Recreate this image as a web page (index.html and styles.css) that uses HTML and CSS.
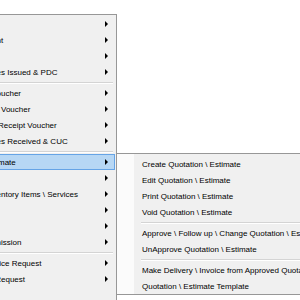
FILE: index.html
```html
<!DOCTYPE html>
<html lang="en">
<head>
    <meta charset="UTF-8">
    <meta name="viewport" content="width=device-width, initial-scale=1.0">
    <title>Quotation Menu</title>
    <link rel="stylesheet" href="styles.css">
</head>
<body>
<div class="desktop">
    <!-- Главное выпадающее меню (левая часть уходит за край окна) -->
    <div class="menu menu-main">
        <div class="item"><span class="label"><span class="pre"><span>Purchase&nbsp;&nbsp;</span></span></span><span class="arrow"></span></div>
        <div class="item"><span class="label"><span class="pre"><span>Bank Statemen</span></span>t</span><span class="arrow"></span></div>
        <div class="item"><span class="label"><span class="pre"><span>Bank Transfer&nbsp;&nbsp;</span></span></span><span class="arrow"></span></div>
        <div class="item"><span class="label"><span class="pre"><span>Cheque</span></span>s Issued &amp; PDC</span><span class="arrow"></span></div>
        <div class="sep"></div>
        <div class="item"><span class="label"><span class="pre"><span>Payment Vo</span></span>ucher</span><span class="arrow"></span></div>
        <div class="item"><span class="label"><span class="pre"><span>Journal&nbsp;</span></span>Voucher</span><span class="arrow"></span></div>
        <div class="item"><span class="label cut"><span class="pre"><span>Cash&nbsp;</span></span>Receipt Voucher</span><span class="arrow"></span></div>
        <div class="item"><span class="label"><span class="pre"><span>Cheque</span></span>s Received &amp; CUC</span><span class="arrow"></span></div>
        <div class="sep"></div>
        <div class="item active"><span class="label cut"><span class="pre"><span>Quotation \ Esti</span></span>mate</span><span class="arrow"></span></div>
        <div class="item"><span class="label"><span class="pre"><span>Sales Order&nbsp;&nbsp;</span></span></span><span class="arrow"></span></div>
        <div class="item"><span class="label"><span class="pre"><span>Inve</span></span>ntory Items \ Services</span><span class="arrow"></span></div>
        <div class="item"><span class="label"><span class="pre"><span>Delivery Note&nbsp;&nbsp;</span></span></span><span class="arrow"></span></div>
        <div class="item"><span class="label"><span class="pre"><span>Sales Invoice&nbsp;&nbsp;</span></span></span><span class="arrow"></span></div>
        <div class="item"><span class="label"><span class="pre"><span>Comm</span></span>ission</span><span class="arrow"></span></div>
        <div class="sep"></div>
        <div class="item"><span class="label"><span class="pre"><span>Servi</span></span>ce Request</span><span class="arrow"></span></div>
        <div class="item"><span class="label"><span class="pre"><span>Purchase R</span></span>equest</span><span class="arrow"></span></div>
    </div>

    <!-- Подменю "Quotation \ Estimate" -->
    <div class="menu menu-sub">
        <div class="item"><span class="label">Create Quotation \ Estimate</span></div>
        <div class="item"><span class="label">Edit Quotation \ Estimate</span></div>
        <div class="item"><span class="label">Print Quotation \ Estimate</span></div>
        <div class="item"><span class="label">Void Quotation \ Estimate</span></div>
        <div class="sep"></div>
        <div class="item"><span class="label">Approve \ Follow up \ Change Quotation \ Estimate Status</span></div>
        <div class="item"><span class="label">UnApprove Quotation \ Estimate</span></div>
        <div class="sep"></div>
        <div class="item"><span class="label">Make Delivery \ Invoice from Approved Quotation</span></div>
        <div class="item"><span class="label">Quotation \ Estimate Template</span></div>
    </div>
</div>
</body>
</html>
```

FILE: styles.css
```css
/* Общие стили */
html, body {
    overflow: hidden;
}

body {
    margin: 0;
    background: #ffffff;
    font-family: 'Liberation Sans', Arial, sans-serif;
    font-size: 8px;
    color: #000000;
}

.desktop {
    display: flex;
    align-items: flex-start;
    padding-top: 14px;
    margin-left: -80px;
}

/* Меню */
.menu {
    flex-shrink: 0;
    box-sizing: border-box;
    background: #f0f0f0;
    border: 1px solid #979797;
}

.menu-main {
    width: 197px;
    padding: 1px 0 30px;
}

.menu-sub {
    width: 260px;
    margin-top: 139px;
    margin-left: -1px;
    padding-top: 2px;
    background: linear-gradient(to right, #fbfbfb 17px, #f0f0f0 17px);
}

.item {
    height: 16px;
    box-sizing: border-box;
    border: 1px solid transparent;
    display: flex;
    align-items: center;
    justify-content: space-between;
    white-space: nowrap;
}

.menu-main .item {
    margin: 0 1px 0 2px;
    padding: 0 6px 0 77px;
}

.menu-sub .item {
    padding-left: 24px;
}

.item.active {
    background: #b7d7f4;
    border-color: #66a4e6;
}

/* Начало подписи, которое не помещается в окно, уходит влево */
.pre {
    display: inline-flex;
    width: 0;
    justify-content: flex-end;
}

.label.cut {
    margin-left: -3px;
}

/* Стрелка подменю */
.arrow {
    width: 0;
    height: 0;
    border-left: 3px solid #000000;
    border-top: 3px solid transparent;
    border-bottom: 3px solid transparent;
}

/* Разделители */
.sep {
    height: 1px;
    margin: 2px 0;
    background: #d4d4d4;
    border-bottom: 1px solid #ffffff;
}

.menu-main .sep {
    margin: 2px 3px 1px 28px;
}

.menu-sub .sep {
    margin: 2px 0 1px 24px;
}
```
